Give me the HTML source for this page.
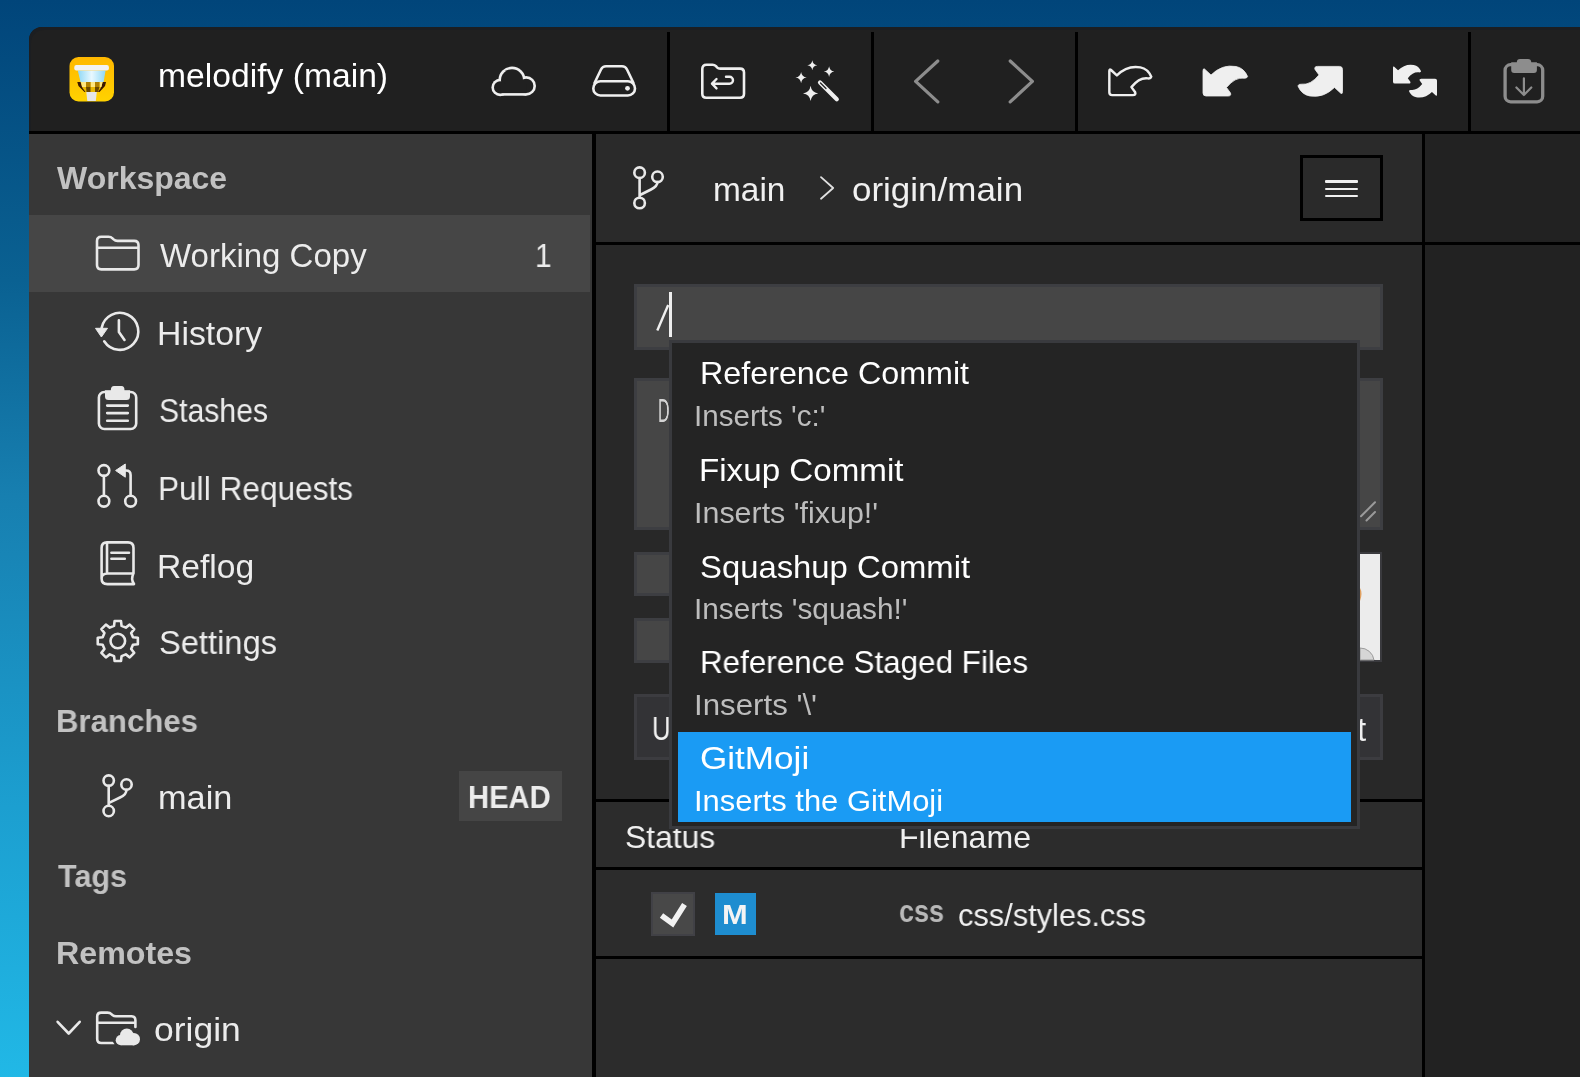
<!DOCTYPE html>
<html><head><meta charset="utf-8"><style>
html,body{margin:0;padding:0;width:1580px;height:1077px;overflow:hidden}
body{background:linear-gradient(180deg,#01457a 0%,#0a6192 26%,#177fb0 46%,#1c9fd0 75%,#21b8e6 100%);position:relative;font-family:"Liberation Sans",sans-serif}
.b{position:absolute}
.t{position:absolute;white-space:nowrap;transform-origin:0 0;will-change:transform}
svg{position:absolute;left:0;top:0}
</style></head><body>
<div class="b" style="left:29px;top:27px;width:1600px;height:1100px;background:#202020;border-top-left-radius:13px;box-shadow:inset 2px 3px 0 #1c1e21">
</div>
<div class="b" style="left:29px;top:131px;width:1551px;height:3px;background:#000;"></div>
<div class="b" style="left:667px;top:32px;width:3px;height:99px;background:#000;"></div>
<div class="b" style="left:871px;top:32px;width:3px;height:99px;background:#000;"></div>
<div class="b" style="left:1075px;top:32px;width:3px;height:99px;background:#000;"></div>
<div class="b" style="left:1468px;top:32px;width:3px;height:99px;background:#000;"></div>
<div class="b" style="left:29px;top:134px;width:563px;height:943px;background:#373737;"></div>
<div class="b" style="left:29px;top:215px;width:561px;height:77px;background:#464646;"></div>
<div class="b" style="left:592px;top:134px;width:4px;height:943px;background:#000;"></div>
<div class="b" style="left:596px;top:134px;width:826px;height:108px;background:#2a2a2a;"></div>
<div class="b" style="left:596px;top:242px;width:826px;height:3px;background:#000;"></div>
<div class="b" style="left:596px;top:245px;width:826px;height:832px;background:#282828;"></div>
<div class="b" style="left:1422px;top:134px;width:3px;height:943px;background:#000;"></div>
<div class="b" style="left:1425px;top:134px;width:155px;height:108px;background:#222;"></div>
<div class="b" style="left:1425px;top:242px;width:155px;height:3px;background:#000;"></div>
<div class="b" style="left:1425px;top:245px;width:155px;height:832px;background:#222;"></div>
<div class="t" style="left:157.57px;top:58.56px;font-size:33px;line-height:33px;color:#fff;transform:scaleX(1.0200);">melodify (main)</div>
<div class="t" style="left:56.80px;top:162.41px;font-size:32px;line-height:32px;color:#c2c2c2;font-weight:700;">Workspace</div>
<div class="t" style="left:55.66px;top:704.91px;font-size:32px;line-height:32px;color:#c2c2c2;font-weight:700;transform:scaleX(0.9736);">Branches</div>
<div class="t" style="left:57.70px;top:859.91px;font-size:32px;line-height:32px;color:#c2c2c2;font-weight:700;transform:scaleX(0.9543);">Tags</div>
<div class="t" style="left:55.66px;top:936.91px;font-size:32px;line-height:32px;color:#c2c2c2;font-weight:700;transform:scaleX(1.0064);">Remotes</div>
<div class="t" style="left:159.60px;top:239.06px;font-size:33px;line-height:33px;color:#ececec;">Working Copy</div>
<div class="t" style="left:535.19px;top:239.06px;font-size:33px;line-height:33px;color:#ececec;transform:scaleX(0.9072);">1</div>
<div class="t" style="left:157.12px;top:317.06px;font-size:33px;line-height:33px;color:#ececec;transform:scaleX(1.0238);">History</div>
<div class="t" style="left:159.18px;top:394.06px;font-size:33px;line-height:33px;color:#ececec;transform:scaleX(0.9140);">Stashes</div>
<div class="t" style="left:158.17px;top:472.06px;font-size:33px;line-height:33px;color:#ececec;transform:scaleX(0.9579);">Pull Requests</div>
<div class="t" style="left:157.06px;top:550.06px;font-size:33px;line-height:33px;color:#ececec;transform:scaleX(1.0196);">Reflog</div>
<div class="t" style="left:159.18px;top:626.06px;font-size:33px;line-height:33px;color:#ececec;transform:scaleX(0.9894);">Settings</div>
<div class="t" style="left:158.17px;top:780.66px;font-size:33px;line-height:33px;color:#ececec;transform:scaleX(1.0390);">main</div>
<div class="b" style="left:459px;top:771px;width:103px;height:50px;background:#454545;"></div>
<div class="t" style="left:468.36px;top:781.75px;font-size:31px;line-height:31px;color:#ececec;font-weight:700;transform:scaleX(0.9409);">HEAD</div>
<div class="t" style="left:153.96px;top:1012.56px;font-size:33px;line-height:33px;color:#ececec;transform:scaleX(1.0747);">origin</div>
<div class="t" style="left:713.36px;top:173.06px;font-size:33px;line-height:33px;color:#f0f0f0;transform:scaleX(1.0127);">main</div>
<div class="t" style="left:852.18px;top:173.06px;font-size:33px;line-height:33px;color:#f0f0f0;transform:scaleX(1.0600);">origin/main</div>
<div class="b" style="left:1300px;top:155px;width:77px;height:59.5px;border:3px solid #000;background:#2a2a2a"></div>
<div class="b" style="left:1325px;top:180.4px;width:33px;height:2.1999999999999886px;background:#f0f0f0;border-radius:1px"></div>
<div class="b" style="left:1325px;top:187.6px;width:33px;height:2.1999999999999886px;background:#f0f0f0;border-radius:1px"></div>
<div class="b" style="left:1325px;top:194.8px;width:33px;height:2.1999999999999886px;background:#f0f0f0;border-radius:1px"></div>
<div class="b" style="left:634px;top:284px;width:743px;height:60px;background:#464646;border:3px solid #3d3e42"></div>
<div class="b" style="left:634px;top:378px;width:743px;height:146px;background:#464646;border:3px solid #3d3e42"></div>
<div class="b" style="left:634px;top:552px;width:610px;height:38px;background:#464646;border:3px solid #3d3e42"></div>
<div class="b" style="left:634px;top:618px;width:610px;height:39px;background:#464646;border:3px solid #3d3e42"></div>
<div class="b" style="left:1270px;top:552px;width:108px;height:106px;background:#ececec;border:2.5px solid #3a3a3e"></div>
<div class="b" style="left:634px;top:694px;width:743px;height:60px;background:#333336;border:3px solid #3c3c40"></div>
<div class="t" style="left:657.55px;top:394.06px;font-size:33px;line-height:33px;color:#d4d4d4;transform:scaleX(0.4818);">D</div>
<div class="t" style="left:651.69px;top:712.06px;font-size:33px;line-height:33px;color:#f0f0f0;transform:scaleX(0.7805);">U</div>
<div class="t" style="left:1357.30px;top:712.56px;font-size:33px;line-height:33px;color:#f0f0f0;">t</div>
<div class="b" style="left:669px;top:292px;width:3px;height:45px;background:#eee;"></div>
<div class="b" style="left:596px;top:799px;width:826px;height:3px;background:#000;"></div>
<div class="b" style="left:596px;top:867px;width:826px;height:3px;background:#000;"></div>
<div class="b" style="left:872px;top:802px;width:3px;height:65px;background:#000;"></div>
<div class="b" style="left:596px;top:956px;width:826px;height:3px;background:#000;"></div>
<div class="b" style="left:596px;top:802px;width:826px;height:65px;background:#2c2c2c;"></div>
<div class="b" style="left:596px;top:870px;width:826px;height:86px;background:#2c2c2c;"></div>
<div class="b" style="left:596px;top:959px;width:826px;height:118px;background:#2c2c2c;"></div>
<div class="t" style="left:624.74px;top:821.21px;font-size:32px;line-height:32px;color:#f0f0f0;transform:scaleX(0.9932);">Status</div>
<div class="t" style="left:899.05px;top:820.91px;font-size:32px;line-height:32px;color:#f0f0f0;transform:scaleX(1.0030);">Filename</div>
<div class="b" style="left:651px;top:892px;width:40px;height:40px;background:#484848;border:2px solid #414146"></div>
<div class="b" style="left:715px;top:893px;width:41px;height:42px;background:#1e8dd0;"></div>
<div class="t" style="left:722.29px;top:900.72px;font-size:27.5px;line-height:27.5px;color:#f4f4f4;font-weight:700;transform:scaleX(1.1224);">M</div>
<div class="t" style="left:898.98px;top:896.45px;font-size:31px;line-height:31px;color:#b8b8b8;font-weight:700;transform:scaleX(0.8704);">css</div>
<div class="t" style="left:958.19px;top:898.71px;font-size:32px;line-height:32px;color:#f0f0f0;transform:scaleX(0.9616);">css/styles.css</div>
<svg width="1580" height="1077" viewBox="0 0 1580 1077">
<defs><linearGradient id="yel" x1="0" y1="0" x2="0" y2="1"><stop offset="0" stop-color="#ffb800"/><stop offset="1" stop-color="#ffd200"/></linearGradient><linearGradient id="gls" x1="0" y1="0" x2="1" y2="0"><stop offset="0" stop-color="#8fd8f5"/><stop offset="0.5" stop-color="#e8f8ff"/><stop offset="1" stop-color="#8fd8f5"/></linearGradient></defs>
<rect x="69.5" y="57" width="44.5" height="44.5" rx="9" fill="url(#yel)"/>
<path d="M77.8 70.5 L105.6 70.5 L103.6 82 L80.5 82 Z" fill="url(#gls)"/>
<path d="M77.3 82 L106 82 L105 86 L99.5 92 L84.5 92 L78.5 86 Z" fill="#e9b800"/>
<path d="M77.3 82 L80.5 82 L82.5 88 L85.5 92 L84.5 92 L78.5 86 Z M106 82 L102.8 82 L100.8 88 L98 92 L99.5 92 L105 86 Z" fill="#3a1800"/>
<path d="M81 82 L86 82 L86 87 L82 87 Z M90.5 82 L95 82 L95 87 L90.5 87 Z M99.5 82 L102.5 82 L101.5 87 L99.5 87 Z" fill="#ffe680"/>
<path d="M86 87 L90.5 87 L90.5 92 L86.5 92 Z M95 87 L99.5 87 L98 92 L95 92 Z" fill="#6a4800"/>
<path d="M86 82 L90.5 82 L90.5 87 L86 87 Z M95 82 L99.5 82 L99.5 87 L95 87 Z" fill="#b08000"/>
<path d="M86.3 92 L96.8 92 L95.8 101 L87.3 101 Z" fill="#e6e6e6"/>
<rect x="74.3" y="65" width="34.6" height="5.5" rx="2" fill="#f2f2f2"/>
<g fill="#efefef"><circle cx="526.2" cy="85.9" r="9.8"/><circle cx="512" cy="80.2" r="13.6"/><circle cx="500.2" cy="87.4" r="8.8"/><rect x="500.2" y="82" width="26" height="13.7"/></g>
<g fill="#202020"><circle cx="526.2" cy="85.9" r="7.2"/><circle cx="512" cy="80.2" r="11"/><circle cx="500.2" cy="87.4" r="6.2"/><rect x="500.2" y="84" width="26" height="9.1"/></g>
<path d="M594.5 83 L601 69.5 Q602.6 66.3 606 66.3 L622 66.3 Q625.4 66.3 627 69.5 L633.5 83" fill="none" stroke="#efefef" stroke-width="2.6" stroke-linecap="round" stroke-linejoin="round"/>
<rect x="593.3" y="81.3" width="41.7" height="14.2" rx="7.1" fill="none" stroke="#efefef" stroke-width="2.6" stroke-linecap="round" stroke-linejoin="round"/>
<circle cx="627.5" cy="88.3" r="2.4" fill="#efefef"/>
<path d="M702.3 69 Q702.3 64.7 706.6 64.7 L712.5 64.7 Q714.5 64.7 716 66.2 L717 67.3 Q718.3 68.6 720.3 68.6 L740 68.6 Q744 68.6 744 72.6 L744 93.7 Q744 97.7 740 97.7 L706.3 97.7 Q702.3 97.7 702.3 93.7 Z" fill="none" stroke="#efefef" stroke-width="2.6" stroke-linecap="round" stroke-linejoin="round"/>
<path d="M716.5 79 L712 83.7 L716.5 88.4 M712 83.7 L729.5 83.7 A3.5 3.5 0 0 0 729.5 76.7 L726 76.7" fill="none" stroke="#efefef" stroke-width="2.4" stroke-linecap="round" stroke-linejoin="round"/>
<path d="M812.3 60.3 Q812.9 64.7 817.3 65.3 Q812.9 65.89999999999999 812.3 70.3 Q811.6999999999999 65.89999999999999 807.3 65.3 Q811.6999999999999 64.7 812.3 60.3Z M829.1 66.3 Q829.736 70.964 834.4 71.6 Q829.736 72.23599999999999 829.1 76.89999999999999 Q828.464 72.23599999999999 823.8000000000001 71.6 Q828.464 70.964 829.1 66.3Z M801.1 72.0 Q801.772 76.928 806.7 77.6 Q801.772 78.27199999999999 801.1 83.19999999999999 Q800.428 78.27199999999999 795.5 77.6 Q800.428 76.928 801.1 72.0Z M810.6 85.80000000000001 Q811.5120000000001 92.488 818.2 93.4 Q811.5120000000001 94.31200000000001 810.6 101.0 Q809.688 94.31200000000001 803.0 93.4 Q809.688 92.488 810.6 85.80000000000001Z" fill="#efefef"/>
<line x1="820" y1="82.5" x2="836.8" y2="99.3" stroke="#efefef" stroke-width="4.2" stroke-linecap="round"/>
<line x1="820.5" y1="83" x2="826" y2="88.5" stroke="#202020" stroke-width="1.2" stroke-linecap="round"/>
<path d="M937.8 61 L915.6 81.4 L937.8 101.9 M1010.2 61 L1032.4 81.4 L1010.2 101.9" fill="none" stroke="#8d8d8d" stroke-width="3.2" stroke-linecap="round" stroke-linejoin="round"/>
<path d="M1204.5 69 L1211 75 Q1222 64 1236 66.5 Q1244 68 1247.6 76.5 Q1247 78.6 1244 78.2 Q1235 77 1226.5 87.5 L1230.5 93 Q1231.5 96 1228 96 L1206 96 Q1203 96 1203 93 L1203 71 Q1203 68.2 1204.5 69 Z" transform="translate(-95 0) translate(1225.3 81.2) scale(0.94) translate(-1225.3 -81.2)" fill="none" stroke="#efefef" stroke-width="2.6" stroke-linejoin="round"/>
<path d="M1204.5 69 L1211 75 Q1222 64 1236 66.5 Q1244 68 1247.6 76.5 Q1247 78.6 1244 78.2 Q1235 77 1226.5 87.5 L1230.5 93 Q1231.5 96 1228 96 L1206 96 Q1203 96 1203 93 L1203 71 Q1203 68.2 1204.5 69 Z" fill="#efefef" stroke="#efefef" stroke-width="0.8" stroke-linejoin="round"/>
<path d="M1204.5 69 L1211 75 Q1222 64 1236 66.5 Q1244 68 1247.6 76.5 Q1247 78.6 1244 78.2 Q1235 77 1226.5 87.5 L1230.5 93 Q1231.5 96 1228 96 L1206 96 Q1203 96 1203 93 L1203 71 Q1203 68.2 1204.5 69 Z" transform="translate(2545.5 162.4) scale(-1 -1)" fill="#efefef" stroke="#efefef" stroke-width="0.8" stroke-linejoin="round"/>
<path d="M1204.5 69 L1211 75 Q1222 64 1236 66.5 Q1244 68 1247.6 76.5 Q1247 78.6 1244 78.2 Q1235 77 1226.5 87.5 L1230.5 93 Q1231.5 96 1228 96 L1206 96 Q1203 96 1203 93 L1203 71 Q1203 68.2 1204.5 69 Z" transform="translate(1393 65) scale(0.63) translate(-1203 -66.5)" fill="#efefef"/>
<path d="M1204.5 69 L1211 75 Q1222 64 1236 66.5 Q1244 68 1247.6 76.5 Q1247 78.6 1244 78.2 Q1235 77 1226.5 87.5 L1230.5 93 Q1231.5 96 1228 96 L1206 96 Q1203 96 1203 93 L1203 71 Q1203 68.2 1204.5 69 Z" transform="translate(1437 97.3) scale(-0.63 -0.63) translate(-1203 -66.5)" fill="#efefef"/>
<rect x="1505.1" y="64.7" width="37.6" height="37.1" rx="5.5" fill="none" stroke="#8d8d8d" stroke-width="3.3"/>
<path d="M1511.2 62.3 L1516.8 62.3 Q1517 59 1520 59 L1528 59 Q1531 59 1531.3 62.3 L1536.9 62.3 L1536.9 70 Q1536.9 73 1533.9 73 L1514.2 73 Q1511.2 73 1511.2 70 Z" fill="#8d8d8d"/>
<path d="M1523.9 78.3 L1523.9 95 M1516.4 87.5 L1523.9 95 L1531.3 87.5" fill="none" stroke="#8d8d8d" stroke-width="2.2" stroke-linecap="round" stroke-linejoin="round"/>
<path d="M97 241 Q97 236.8 101.3 236.8 L108.5 236.8 Q111 236.8 112.8 238.6 L113.6 239.4 Q115.2 240.9 117.5 240.9 L134.2 240.9 Q138.5 240.9 138.5 245.2 L138.5 265.1 Q138.5 269.4 134.2 269.4 L101.3 269.4 Q97 269.4 97 265.1 Z M97 247.7 L138.5 247.7" fill="none" stroke="#e9e9e9" stroke-width="2.6" stroke-linecap="round" stroke-linejoin="round"/>
<path d="M101.6 328 A18.5 18.5 0 1 1 104.2 341.3 M118.9 320.3 L118.9 332 L124.5 340" fill="none" stroke="#e9e9e9" stroke-width="2.6" stroke-linecap="round" stroke-linejoin="round" stroke-width="2.8"/>
<path d="M95.5 328.3 L107.5 328.3 L101.4 337 Z" fill="#e9e9e9" stroke="#e9e9e9" stroke-width="1" stroke-linejoin="round"/>
<rect x="98.9" y="392" width="37.3" height="37" rx="5.5" fill="none" stroke="#e9e9e9" stroke-width="2.6" stroke-linecap="round" stroke-linejoin="round" stroke-width="3.2"/>
<path d="M105 390.3 L110.8 390.3 Q111 386.1 114 386.1 L121.5 386.1 Q124.5 386.1 124.5 390.3 L130 390.3 L130 396.5 Q130 400 126.5 400 L108.5 400 Q105 400 105 396.5 Z" fill="#e9e9e9"/>
<path d="M107.2 405.6 L127.8 405.6 M107.2 413.1 L127.8 413.1 M107.2 420.7 L127.8 420.7" fill="none" stroke="#e9e9e9" stroke-width="2.6" stroke-linecap="round" stroke-linejoin="round"/>
<circle cx="103.9" cy="470.5" r="5.4" fill="none" stroke="#e9e9e9" stroke-width="2.6" stroke-linecap="round" stroke-linejoin="round"/><circle cx="103.9" cy="501.2" r="5.4" fill="none" stroke="#e9e9e9" stroke-width="2.6" stroke-linecap="round" stroke-linejoin="round"/><circle cx="130.6" cy="501.2" r="5.4" fill="none" stroke="#e9e9e9" stroke-width="2.6" stroke-linecap="round" stroke-linejoin="round"/>
<path d="M103.9 475.9 L103.9 495.8 M130.6 495.8 L130.6 475 Q130.6 470.5 126 470.5 L123 470.5" fill="none" stroke="#e9e9e9" stroke-width="2.6" stroke-linecap="round" stroke-linejoin="round"/>
<path d="M115.6 470.5 L125.3 464 L125.3 477.2 Z" fill="#e9e9e9" stroke="#e9e9e9" stroke-width="1" stroke-linejoin="round"/>
<path d="M133.5 573.5 L133.5 548 Q133.5 542.4 128 542.4 L107 542.4 Q101.6 542.4 101.6 548 L101.6 578.5 Q101.6 584.1 107.5 584.1 L134 584.1 Q130.5 579 133.5 573.5 L107.5 573.5 Q101.6 573.5 101.6 578.5 M107 542.4 L107 573.5 M111.4 552.8 L129 552.8 M111.4 558.7 L124.8 558.7" fill="none" stroke="#e9e9e9" stroke-width="2.6" stroke-linecap="round" stroke-linejoin="round"/>
<path d="M114.04 625.86 L114.62 620.95 L120.98 620.95 L121.56 625.86 L125.85 627.64 L129.73 624.58 L134.22 629.07 L131.16 632.95 L132.94 637.24 L137.85 637.82 L137.85 644.18 L132.94 644.76 L131.16 649.05 L134.22 652.93 L129.73 657.42 L125.85 654.36 L121.56 656.14 L120.98 661.05 L114.62 661.05 L114.04 656.14 L109.75 654.36 L105.87 657.42 L101.38 652.93 L104.44 649.05 L102.66 644.76 L97.75 644.18 L97.75 637.82 L102.66 637.24 L104.44 632.95 L101.38 629.07 L105.87 624.58 L109.75 627.64 Z" fill="none" stroke="#e9e9e9" stroke-width="2.6" stroke-linecap="round" stroke-linejoin="round"/>
<circle cx="117.8" cy="641" r="7.3" fill="none" stroke="#e9e9e9" stroke-width="2.6" stroke-linecap="round" stroke-linejoin="round"/>
<circle cx="108.7" cy="780.6" r="5.2" fill="none" stroke="#e9e9e9" stroke-width="2.6" stroke-linecap="round" stroke-linejoin="round" stroke-width="2.7"/><circle cx="126.5" cy="784.5" r="5.2" fill="none" stroke="#e9e9e9" stroke-width="2.6" stroke-linecap="round" stroke-linejoin="round" stroke-width="2.7"/><circle cx="108.7" cy="811" r="5.2" fill="none" stroke="#e9e9e9" stroke-width="2.6" stroke-linecap="round" stroke-linejoin="round" stroke-width="2.7"/>
<path d="M108.7 785.8 L108.7 805.8 M126.5 789.7 Q126.5 794.5 120 797.5 L109 802.8" fill="none" stroke="#e9e9e9" stroke-width="2.6" stroke-linecap="round" stroke-linejoin="round" stroke-width="2.7"/>
<path d="M57.6 1021.8 L68.7 1033.5 L79.7 1021.8" fill="none" stroke="#e9e9e9" stroke-width="2.6" stroke-linecap="round" stroke-linejoin="round" stroke-width="2.3"/>
<path d="M114 1043 L101.2 1043 Q97.2 1043 97.2 1039 L97.2 1016.6 Q97.2 1012.6 101.2 1012.6 L107.5 1012.6 Q110 1012.6 111.7 1014.3 L112.4 1015 Q113.9 1016.3 116 1016.3 L131.3 1016.3 Q135.4 1016.3 135.4 1020.3 L135.4 1027 M97.2 1022.8 L135.4 1022.8" fill="none" stroke="#e9e9e9" stroke-width="2.6" stroke-linecap="round" stroke-linejoin="round" stroke-width="2.5"/>
<g fill="#373737"><circle cx="133" cy="1038.5" r="8.8"/><circle cx="126" cy="1034" r="9.6"/><circle cx="120" cy="1039" r="7.6"/><rect x="118" y="1036" width="16" height="11.5"/></g>
<g fill="#e9e9e9"><circle cx="133.8" cy="1039.2" r="6.2"/><circle cx="126.8" cy="1035.3" r="6.8"/><circle cx="120.8" cy="1040.2" r="5.1"/><rect x="120.8" y="1038" width="13" height="7.3"/></g>
<circle cx="639.6" cy="172.7" r="5.3" fill="none" stroke="#e9e9e9" stroke-width="2.6" stroke-linecap="round" stroke-linejoin="round" stroke-width="3"/><circle cx="657.5" cy="176.8" r="5.3" fill="none" stroke="#e9e9e9" stroke-width="2.6" stroke-linecap="round" stroke-linejoin="round" stroke-width="3"/><circle cx="639.6" cy="203" r="5.3" fill="none" stroke="#e9e9e9" stroke-width="2.6" stroke-linecap="round" stroke-linejoin="round" stroke-width="3"/>
<path d="M639.6 178 L639.6 197.7 M657.5 182.1 Q657.5 186.5 651 189.5 L640 195" fill="none" stroke="#e9e9e9" stroke-width="2.6" stroke-linecap="round" stroke-linejoin="round" stroke-width="3"/>
<path d="M821 177.2 L833.2 188 L821 198.7" fill="none" stroke="#e0e0e0" stroke-width="1.8" stroke-linecap="round" stroke-linejoin="round"/>
<path d="M661.5 915.5 L672.5 923.5 L684.5 904.5" fill="none" stroke="#f2f2f2" stroke-width="5.6" stroke-linecap="butt" stroke-linejoin="miter"/>
<line x1="657.3" y1="330.5" x2="668.2" y2="305" stroke="#f0f0f0" stroke-width="2.4"/>
<path d="M1360 648 A14 14 0 0 1 1374 660 L1360 660 Z" fill="#d6d6d6" stroke="#9a9a9a" stroke-width="1"/><path d="M1360 588 Q1363 593 1360 601 Z" fill="#e0a060"/>
<path d="M1361 516.3 L1375 502.3 M1366.5 520.5 L1375 512" stroke="#9a9a9a" stroke-width="2" stroke-linecap="round"/>
</svg>
<div class="b" style="left:669px;top:340px;width:685px;height:483px;background:#242424;border:3px solid #393a3e"></div>
<div class="b" style="left:678px;top:732px;width:673px;height:90px;background:#1a9bf4;"></div>
<div class="t" style="left:700.18px;top:357.41px;font-size:32px;line-height:32px;color:#fff;transform:scaleX(1.0086);">Reference Commit</div>
<div class="t" style="left:693.94px;top:401.42px;font-size:29.5px;line-height:29.5px;color:#bdbdbd;transform:scaleX(1.0041);">Inserts 'c:'</div>
<div class="t" style="left:699.16px;top:453.61px;font-size:32px;line-height:32px;color:#fff;transform:scaleX(1.0360);">Fixup Commit</div>
<div class="t" style="left:693.93px;top:498.22px;font-size:29.5px;line-height:29.5px;color:#bdbdbd;transform:scaleX(1.0315);">Inserts 'fixup!'</div>
<div class="t" style="left:700.18px;top:550.61px;font-size:32px;line-height:32px;color:#fff;transform:scaleX(1.0259);">Squashup Commit</div>
<div class="t" style="left:693.96px;top:594.42px;font-size:29.5px;line-height:29.5px;color:#bdbdbd;transform:scaleX(1.0104);">Inserts 'squash!'</div>
<div class="t" style="left:700.18px;top:646.21px;font-size:32px;line-height:32px;color:#fff;transform:scaleX(0.9809);">Reference Staged Files</div>
<div class="t" style="left:693.90px;top:690.02px;font-size:29.5px;line-height:29.5px;color:#bdbdbd;transform:scaleX(1.0594);">Inserts '\'</div>
<div class="t" style="left:700.11px;top:741.81px;font-size:32px;line-height:32px;color:#fff;transform:scaleX(1.0968);">GitMoji</div>
<div class="t" style="left:693.94px;top:785.62px;font-size:29.5px;line-height:29.5px;color:#fff;transform:scaleX(1.0477);">Inserts the GitMoji</div>
</body></html>
